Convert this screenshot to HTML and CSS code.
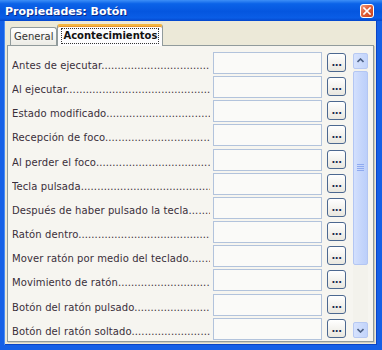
FILE: index.html
```html
<!DOCTYPE html>
<html lang="es">
<head>
  <meta charset="UTF-8">
  <meta name="viewport" content="width=device-width, initial-scale=1.0">
  <title>Propiedades: Botón</title>
  <link rel="stylesheet" href="styles.css">
</head>
<body>
  <div class="window">
    <!-- Title bar -->
    <div class="titlebar">
      <span class="title">Propiedades: Botón</span>
      <span class="close">
        <svg width="8" height="8" viewBox="0 0 8 8"><path d="M1 1 L7 7 M7 1 L1 7" stroke="#fff" stroke-width="1.6" stroke-linecap="square"/></svg>
      </span>
    </div>

    <div class="frame">
      <!-- Tabs -->
      <div class="tabs">
        <div class="tab">General</div>
        <div class="tab active"><span class="focus">Acontecimientos</span></div>
      </div>

      <!-- Events panel -->
      <div class="panel">
        <div class="list">
          <div class="row"><span class="label">Antes de ejecutar</span><span class="field"></span><span class="more">...</span></div>
          <div class="row"><span class="label">Al ejecutar</span><span class="field"></span><span class="more">...</span></div>
          <div class="row"><span class="label">Estado modificado</span><span class="field"></span><span class="more">...</span></div>
          <div class="row"><span class="label">Recepción de foco</span><span class="field"></span><span class="more">...</span></div>
          <div class="row"><span class="label">Al perder el foco</span><span class="field"></span><span class="more">...</span></div>
          <div class="row"><span class="label">Tecla pulsada</span><span class="field"></span><span class="more">...</span></div>
          <div class="row"><span class="label">Después de haber pulsado la tecla</span><span class="field"></span><span class="more">...</span></div>
          <div class="row"><span class="label">Ratón dentro</span><span class="field"></span><span class="more">...</span></div>
          <div class="row"><span class="label">Mover ratón por medio del teclado</span><span class="field"></span><span class="more">...</span></div>
          <div class="row"><span class="label">Movimiento de ratón</span><span class="field"></span><span class="more">...</span></div>
          <div class="row"><span class="label">Botón del ratón pulsado</span><span class="field"></span><span class="more">...</span></div>
          <div class="row"><span class="label">Botón del ratón soltado</span><span class="field"></span><span class="more">...</span></div>
        </div>

        <div class="scrollbar">
          <div class="arrow">
            <svg width="7" height="5" viewBox="0 0 7 5"><path d="M0.5 4 L3.5 1 L6.5 4" fill="none" stroke="#4d6185" stroke-width="1.6"/></svg>
          </div>
          <div class="track">
            <div class="thumb">
              <svg width="7" height="7" viewBox="0 0 7 7"><path d="M0 0.5 H7 M0 2.5 H7 M0 4.5 H7 M0 6.5 H7" stroke="#8faaf0" stroke-width="1"/></svg>
            </div>
          </div>
          <div class="arrow">
            <svg width="7" height="5" viewBox="0 0 7 5"><path d="M0.5 1 L3.5 4 L6.5 1" fill="none" stroke="#4d6185" stroke-width="1.6"/></svg>
          </div>
        </div>
      </div>
    </div>
  </div>
</body>
</html>
```

FILE: styles.css
```css
body {
  margin: 0;
  padding: 0;
  font-family: "DejaVu Sans", Verdana, sans-serif;
  font-size: 10px;
  color: #3a2f3a;
  overflow: hidden;
}
.window {
  width: 382px;
  height: 350px;
  display: flex;
  flex-direction: column;
}
.titlebar {
  height: 22px;
  display: flex;
  align-items: center;
  justify-content: space-between;
  padding: 0 8px 0 5px;
  background: linear-gradient(#3d8ff7 0%, #0b63e8 18%, #0556df 55%, #0a5de6 85%, #0446cc 100%);
}
.title {
  color: #fff;
  font-weight: bold;
  font-size: 11px;
  text-shadow: 1px 1px 0 #0a2a8a;
  margin-top: 2px;
}
.close {
  width: 12px;
  height: 12px;
  margin-top: 2px;
  border: 1px solid #fff;
  border-radius: 3px;
  background: linear-gradient(135deg, #f29a7c 0%, #e2603a 45%, #c8401c 100%);
  display: flex;
  align-items: center;
  justify-content: center;
}
.frame {
  flex: 1;
  display: flex;
  flex-direction: column;
  background-color: #ece9d8;
  border-left: 4px solid #1560e6;
  border-right: 5px solid #1560e6;
  border-bottom: 5px solid #1560e6;
  box-shadow: inset 1px 0 0 #4a8cf4, inset -1px 0 0 #0a44c6, inset 0 -1px 0 #0a44c6;
  padding: 0 3px 3px 3px;
}
.tabs {
  height: 24px;
  display: flex;
  align-items: flex-end;
  padding-left: 3px;
}
.tab {
  height: 17px;
  padding: 0 3px;
  display: flex;
  align-items: center;
  color: #333;
  background: linear-gradient(#ffffff, #ecebe5);
  border: 1px solid #919b9c;
  border-bottom: none;
  border-radius: 3px 3px 0 0;
}
.tab.active {
  position: relative;
  height: 20px;
  margin-bottom: -1px;
  padding: 0 3px;
  font-weight: bold;
  color: #111;
  background: #fcfcfe;
  border-top: 2px solid #f5b63e;
  border-radius: 3px 3px 0 0;
  box-shadow: inset 0 1px 0 #e8952e, inset 0 -1px 0 #fcfcfe;
  z-index: 1;
}
.focus {
  padding: 1px 1px 2px 1px;
  border: 1px dotted #333;
}
.panel {
  flex: 1;
  display: flex;
  min-height: 0;
  background-color: #f6f5f0;
  border: 1px solid #919b9c;
  box-shadow: 1px 1px 0 #d0cdbf;
  padding: 5px 5px 0 4px;
}
.list {
  flex: 1;
  overflow: hidden;
  margin-right: 7px;
}
.row {
  height: 24.2px;
  display: flex;
  align-items: flex-start;
}
.label {
  flex: 1;
  min-width: 0;
  margin-top: 9px;
  line-height: 12px;
  white-space: nowrap;
  overflow: hidden;
  letter-spacing: 0.1px;
}
.label::after {
  content: "..............................................................................................";
}
.field {
  width: 107px;
  height: 20px;
  margin: 1px 0 0 3px;
  border: 1px solid #b2c3dc;
  background-color: #fafaf8;
}
.more {
  width: 17px;
  height: 12px;
  margin: 2px 0 0 5px;
  padding-top: 5px;
  border: 1px solid #4c6890;
  border-radius: 3px;
  background: linear-gradient(#ffffff, #e9e7df);
  color: #1d2b4f;
  font-size: 10px;
  font-weight: bold;
  line-height: 8px;
  text-align: center;
  letter-spacing: -0.5px;
}
.scrollbar {
  width: 15px;
  margin: 2px 0 3px 0;
  display: flex;
  flex-direction: column;
  background-color: #f3f2ec;
}
.arrow {
  height: 16px;
  display: flex;
  align-items: center;
  justify-content: center;
  background: linear-gradient(90deg, #d6e2fd, #c2d4fb);
  border: 1px solid #b7c9f3;
  border-radius: 2px;
  box-sizing: border-box;
}
.track {
  flex: 1;
  padding: 2px 0;
}
.thumb {
  height: 194px;
  display: flex;
  align-items: center;
  justify-content: center;
  background: linear-gradient(90deg, #d3e0fd, #c4d5fb 60%, #bccffa);
  border: 1px solid #b3c6f3;
  border-radius: 2px;
  box-sizing: border-box;
}
```
